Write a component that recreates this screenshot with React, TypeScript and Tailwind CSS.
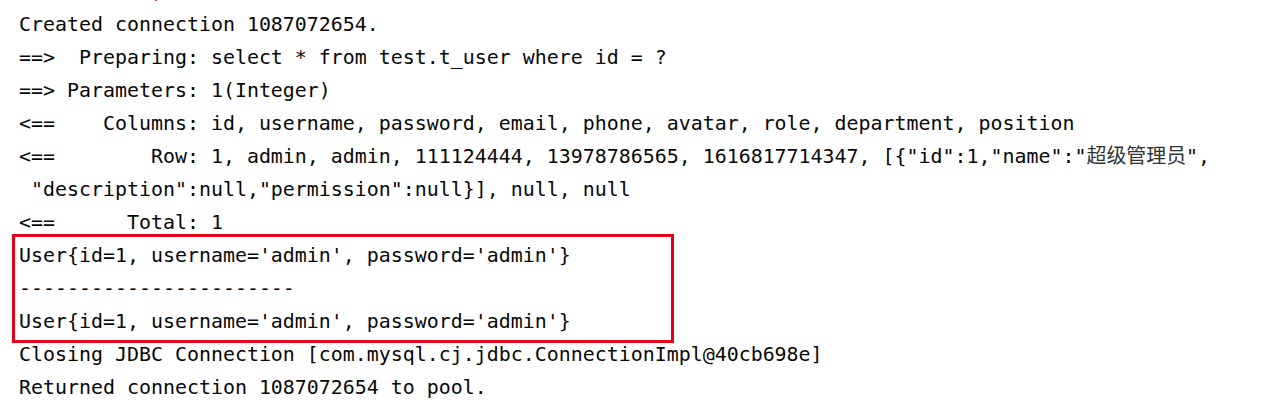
import React from "react";

const lines1 = [
  "Created connection 1087072654.",
  "==>  Preparing: select * from test.t_user where id = ?",
  "==> Parameters: 1(Integer)",
  "<==    Columns: id, username, password, email, phone, avatar, role, department, position",
];

const lines1b = [
  ' "description":null,"permission":null}], null, null',
  "<==      Total: 1",
];

const boxed = [
  "User{id=1, username='admin', password='admin'}",
  "-----------------------",
  "User{id=1, username='admin', password='admin'}",
];

const lines2 = [
  "Closing JDBC Connection [com.mysql.cj.jdbc.ConnectionImpl@40cb698e]",
  "Returned connection 1087072654 to pool.",
];

export default function App() {
  return (
    <div className="w-[1271px] h-[417px] overflow-hidden bg-white">
      <div className="-mt-[25px] pl-[19px] text-[19.93px] leading-[33px] whitespace-pre text-[#080808] font-['DejaVu_Sans_Mono','Noto_Sans_CJK_SC',monospace]">
        <div className="h-[33px] text-[#c0102a]">{"           ,"}</div>
        {lines1.map((l, i) => (
          <div key={i} className="h-[33px]">
            {l}
          </div>
        ))}
        <div className="h-[33px]">
          {'<==        Row: 1, admin, admin, 111124444, 13978786565, 1616817714347, [{"id":1,"name":"'}
          <span className="text-[#333333]">超级管理员</span>
          {'",'}
        </div>
        {lines1b.map((l, i) => (
          <div key={i} className="h-[33px]">
            {l}
          </div>
        ))}
        <div className="-ml-[7px] w-[662px] border-[3px] border-[#e2001a] -my-[5px] py-[2px] pl-[4px]">
          {boxed.map((l, i) => (
            <div key={i} className="h-[33px]">
              {l}
            </div>
          ))}
        </div>
        {lines2.map((l, i) => (
          <div key={i} className="h-[33px]">
            {l}
          </div>
        ))}
      </div>
    </div>
  );
}
